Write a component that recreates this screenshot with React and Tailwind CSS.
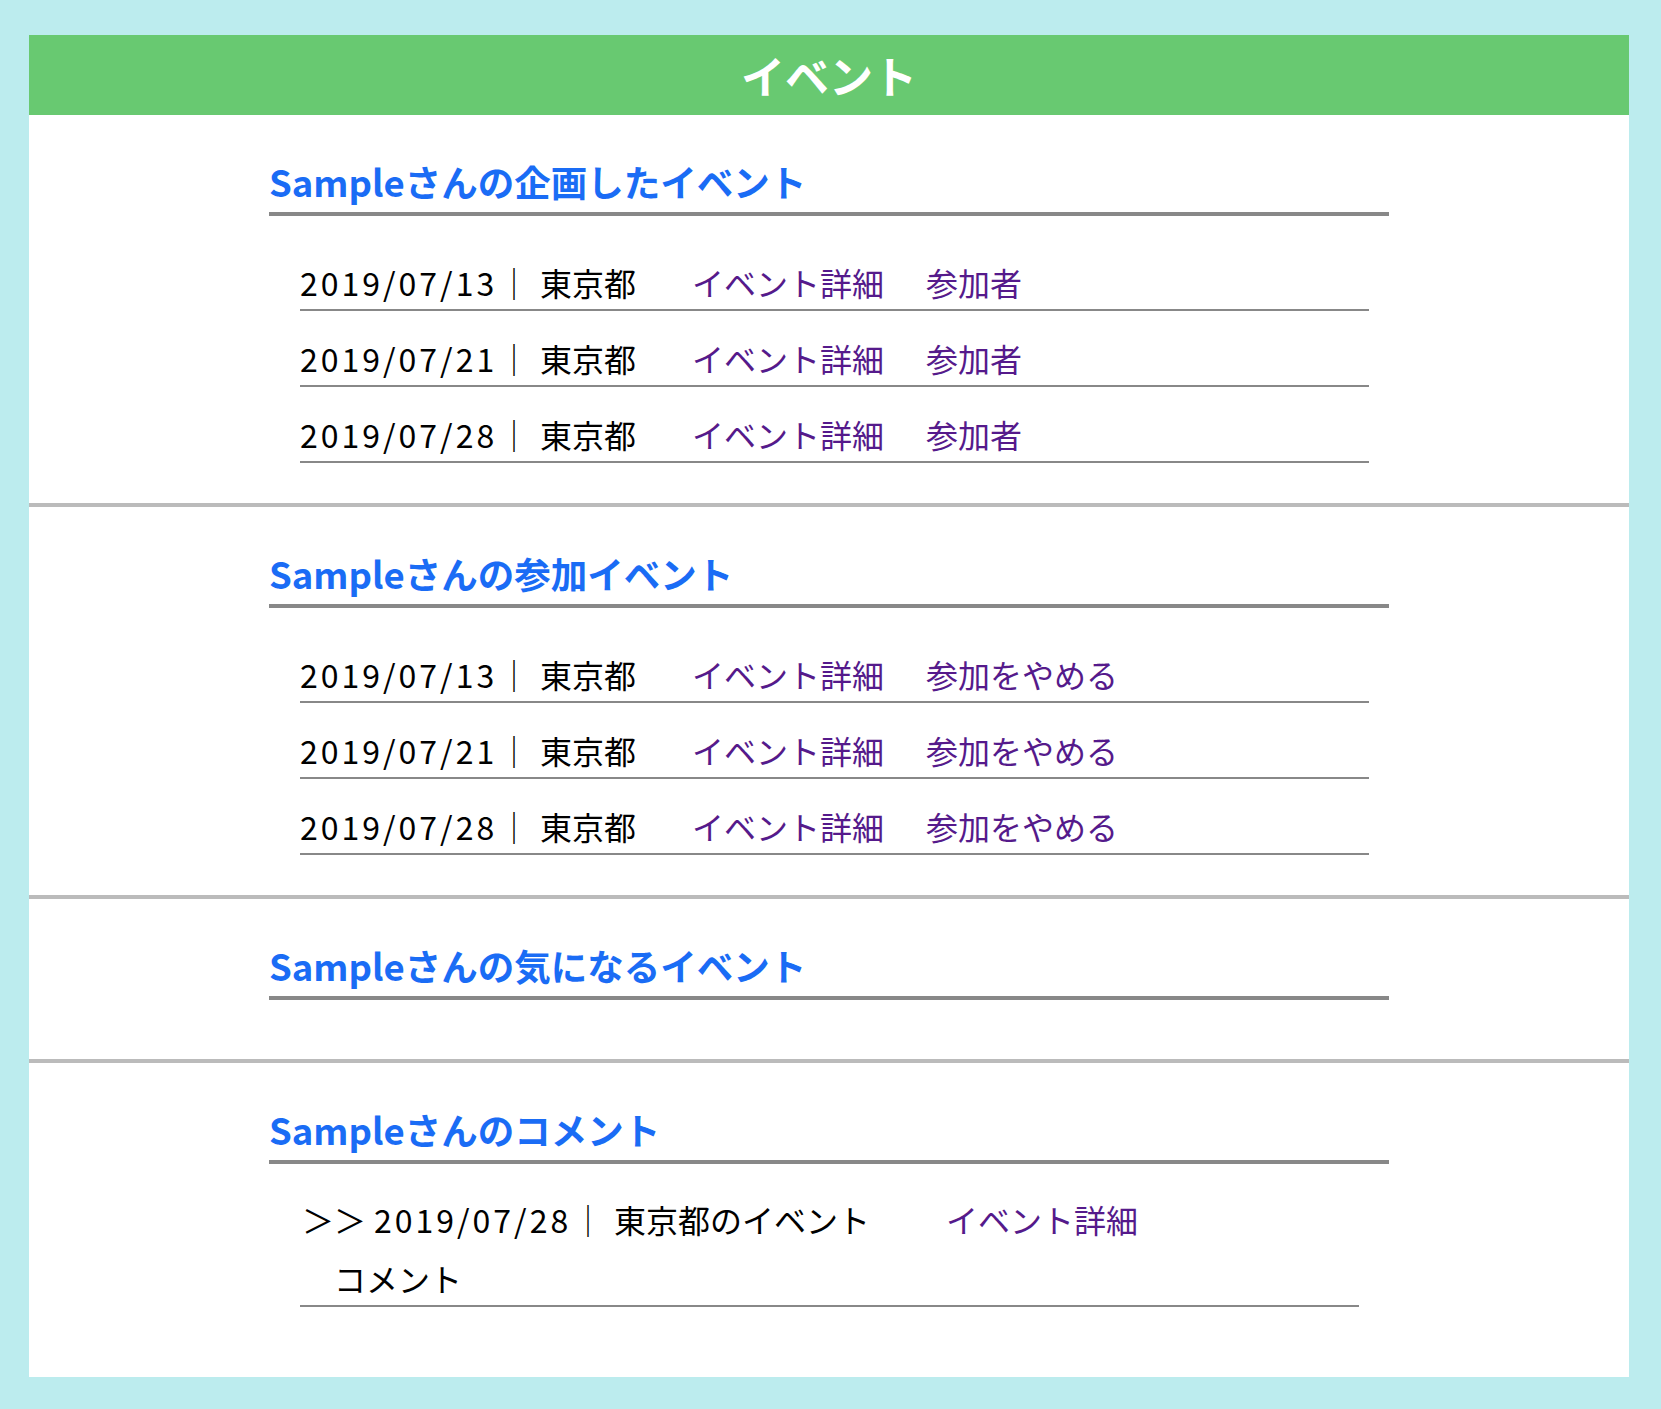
const organized = ["2019/07/13", "2019/07/21", "2019/07/28"];
const joined = ["2019/07/13", "2019/07/21", "2019/07/28"];

function SectionTitle({ children }) {
  return (
    <h2 className="text-[36.5px] leading-[52px] font-bold text-[#1a6cf5] pb-[4px] border-b-4 border-[#888888]">
      {children}
    </h2>
  );
}

function EventRow({ date, action }) {
  return (
    <li className="ml-[31px] mr-[20px] pt-[23px] pb-[3px] border-b-2 border-[#888888]">
      <div className="flex items-center h-[48px] text-[32px] leading-[48px] whitespace-nowrap">
        <span className="w-[198px] tracking-[3px] text-black">{date}</span>
        <span className="w-[32px] text-center text-black">｜</span>
        <span className="w-[152px] ml-[10px] text-black">東京都</span>
        <a className="w-[234px] text-[#551a8b]">イベント詳細</a>
        <a className="text-[#551a8b]">{action}</a>
      </div>
    </li>
  );
}

function Section({ title, last, bottom, children }) {
  return (
    <section className={last ? "pt-[41px] pb-[70px]" : "pt-[41px] border-b-4 border-[#bbbbbb]"}>
      <div className="w-[1120px] mx-auto">
        <SectionTitle>{title}</SectionTitle>
        <ul className={"mt-[19px] " + (bottom ? "" : "pb-[40px]")}>{children}</ul>
      </div>
    </section>
  );
}

export default function App() {
  return (
    <div
      className="min-h-screen bg-[#bcecee] pt-[35px] pb-[32px] pl-[29px]"
      style={{ fontFamily: '"Noto Sans CJK JP", "Noto Sans", sans-serif' }}
    >
      <div className="w-[1600px] bg-white">
        <header className="h-[80px] bg-[#68c971] flex items-center justify-center">
          <h1 className="text-white text-[44px] font-bold leading-none">イベント</h1>
        </header>

        <Section title="Sampleさんの企画したイベント">
          {organized.map((d) => (
            <EventRow key={d} date={d} action="参加者" />
          ))}
        </Section>

        <Section title="Sampleさんの参加イベント">
          {joined.map((d) => (
            <EventRow key={d} date={d} action="参加をやめる" />
          ))}
        </Section>

        <Section title="Sampleさんの気になるイベント" />

        <Section title="Sampleさんのコメント" last bottom>
          <li className="ml-[31px] mr-[30px] pt-[12px] pb-[3px] border-b-2 border-[#888888] text-[32px] leading-[48px] whitespace-nowrap">
            <div className="flex items-center h-[48px]">
              <span className="w-[74px] pl-[2px] text-black">＞＞</span>
              <span className="w-[198px] tracking-[3px] text-black">2019/07/28</span>
              <span className="w-[32px] text-center text-black">｜</span>
              <span className="w-[332px] ml-[10px] text-black">東京都のイベント</span>
              <a className="text-[#551a8b]">イベント詳細</a>
            </div>
            <div className="mt-[11px] h-[48px] pl-[34px] text-black">コメント</div>
          </li>
        </Section>
      </div>
    </div>
  );
}
